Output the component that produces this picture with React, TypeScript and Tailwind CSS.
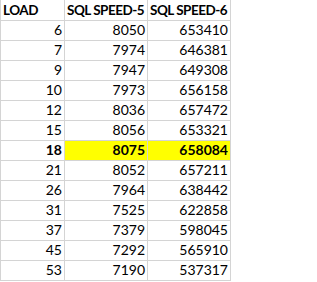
import React from "react";

const rows: [number, number, number][] = [
  [6, 8050, 653410],
  [7, 7974, 646381],
  [9, 7947, 649308],
  [10, 7973, 656158],
  [12, 8036, 657472],
  [15, 8056, 653321],
  [18, 8075, 658084],
  [21, 8052, 657211],
  [26, 7964, 638442],
  [31, 7525, 622858],
  [37, 7379, 598045],
  [45, 7292, 565910],
  [53, 7190, 537317],
];

export default function App() {
  return (
    <div
      className="w-[317px] h-[282px] bg-white text-black overflow-hidden"
      style={{ fontFamily: "Lato, 'Liberation Sans', sans-serif" }}
    >
      <div className="grid grid-cols-[65px_83px_83px] text-[14px] leading-none">
        <div className="h-[21px] border-l border-r border-b border-[#d4d4d4] font-bold text-[13.5px] tracking-[-0.5px] flex items-end pl-[2px] pb-[3px]">LOAD</div>
        <div className="h-[21px] border-r border-b border-[#d4d4d4] font-bold text-[13.5px] tracking-[-0.5px] flex items-end pl-[2px] pb-[3px] whitespace-nowrap">SQL SPEED-5</div>
        <div className="h-[21px] border-r border-b border-[#d4d4d4] font-bold text-[13.5px] tracking-[-0.5px] flex items-end pl-[2px] pb-[3px] whitespace-nowrap">SQL SPEED-6</div>
        {rows.map(([a, b, c]) => {
          const hl = a === 18;
          return (
            <React.Fragment key={a}>
              <div className={`h-[20px] border-l border-r border-b border-[#d4d4d4] flex items-end justify-end pr-[2px] pb-[3px] ${hl ? "font-bold" : ""}`}>{a}</div>
              <div className={`h-[20px] border-r border-b border-[#d4d4d4] flex items-end justify-end pr-[2px] pb-[3px] ${hl ? "font-bold bg-[#ffff00]" : ""}`}>{b}</div>
              <div className={`h-[20px] border-r border-b border-[#d4d4d4] flex items-end justify-end pr-[2px] pb-[3px] ${hl ? "font-bold bg-[#ffff00]" : ""}`}>{c}</div>
            </React.Fragment>
          );
        })}
      </div>
    </div>
  );
}
